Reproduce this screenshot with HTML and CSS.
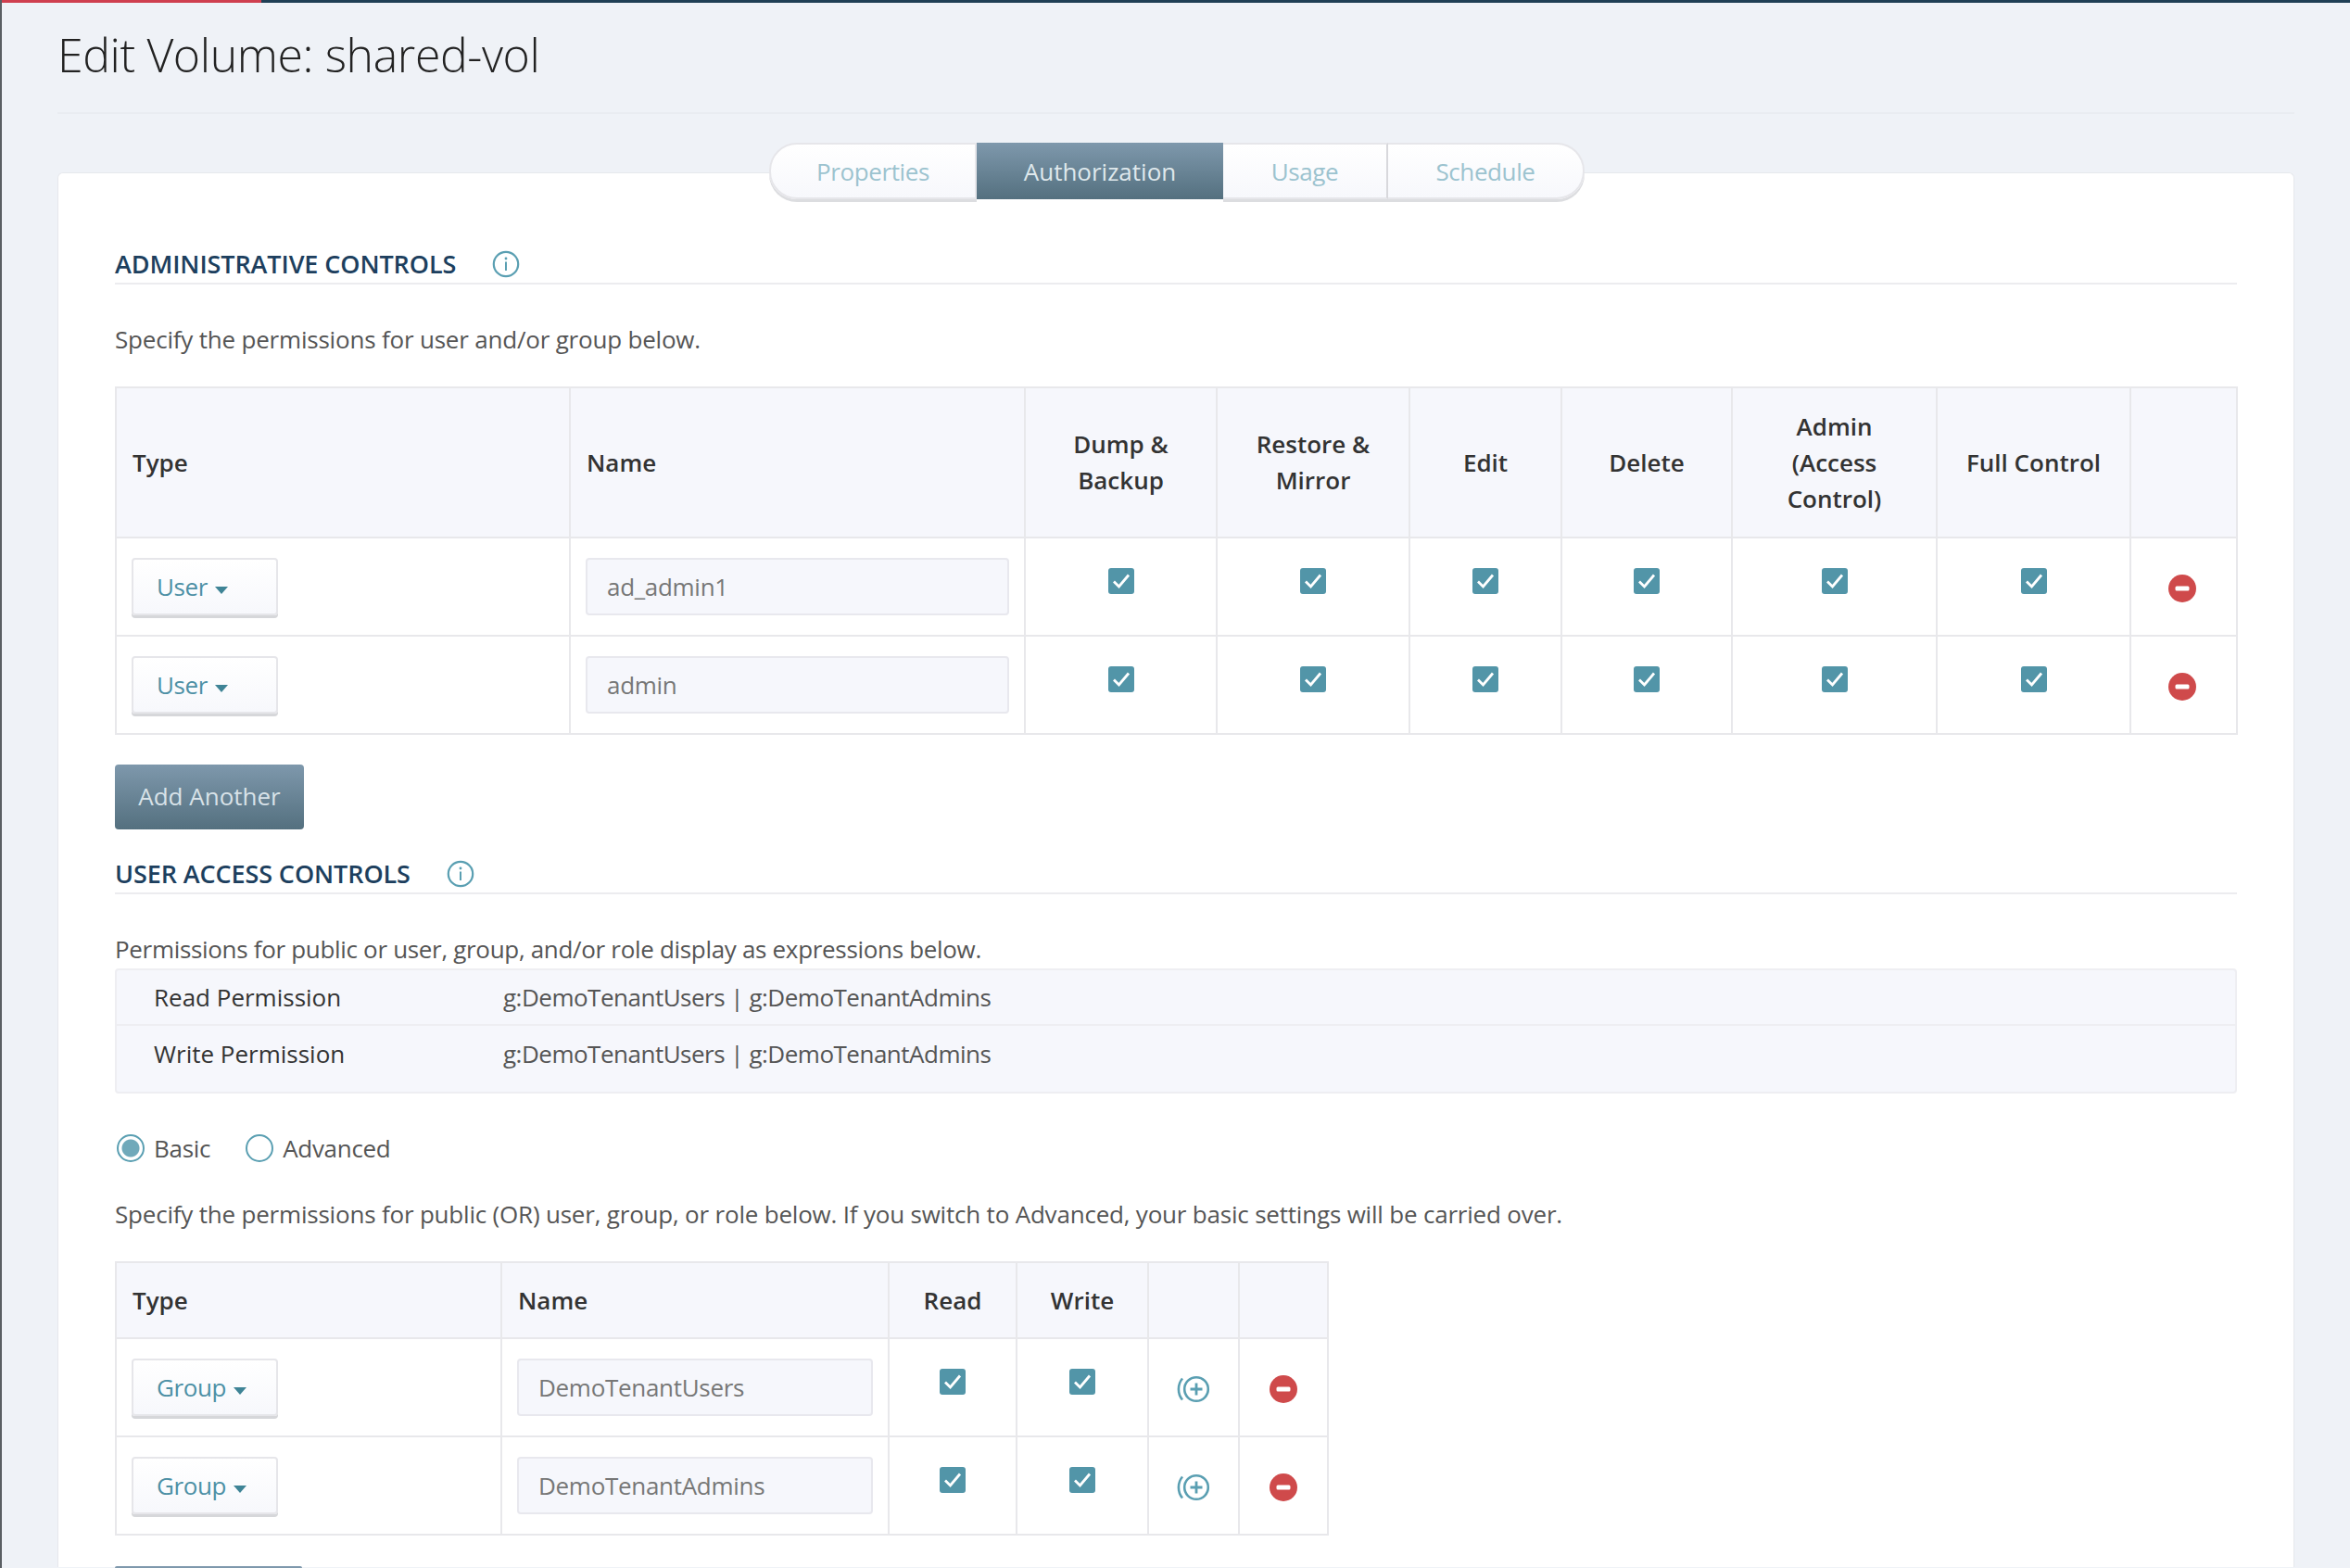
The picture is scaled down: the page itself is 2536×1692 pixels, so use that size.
FILE: index.html
```html
<!DOCTYPE html>
<html lang="en">
<head>
    <meta charset="UTF-8">
    <title>Edit Volume: shared-vol</title>
    <link rel="stylesheet" href="styles.css">
</head>
<body>
    <svg class="defs" width="0" height="0">
        <symbol id="i-info" viewBox="0 0 30 30">
            <circle cx="15" cy="15" r="13.2" fill="none" stroke="#5a9fb2" stroke-width="2.2"/>
            <circle cx="15" cy="9" r="1.4" fill="#5a9fb2"/>
            <rect x="14" y="12.5" width="2" height="9.5" fill="#5a9fb2"/>
        </symbol>
        <symbol id="i-check" viewBox="0 0 28 28">
            <rect width="28" height="28" rx="3" fill="#5295a8"/>
            <path d="M6 14.5l5.5 5.5L22 7.5" fill="none" stroke="#fff" stroke-width="2.8"/>
        </symbol>
        <symbol id="i-remove" viewBox="0 0 30 30">
            <circle cx="15" cy="15" r="15" fill="#cf4a4b"/>
            <rect x="7.5" y="12.5" width="15" height="5" rx="1.5" fill="#fff"/>
        </symbol>
        <symbol id="i-add" viewBox="0 0 38 30">
            <path d="M7 3.5C1.5 10 1.5 20 7 26.5" fill="none" stroke="#5a9fb2" stroke-width="2.6"/>
            <circle cx="22" cy="15" r="12.8" fill="none" stroke="#5a9fb2" stroke-width="2.6"/>
            <path d="M22 8.5v13M15.5 15h13" fill="none" stroke="#5a9fb2" stroke-width="2.8"/>
        </symbol>
    </svg>

    <div class="topbar"><div class="topbar-red"></div></div>

    <div class="page">
        <h1 class="page-title">Edit Volume: shared-vol</h1>

        <div class="card">
            <div class="tabs">
                <a class="tab tab-props">Properties</a>
                <a class="tab tab-auth active">Authorization</a>
                <a class="tab tab-usage">Usage</a>
                <a class="tab tab-sched">Schedule</a>
            </div>

            <div class="section-head first">
                <span class="section-title">ADMINISTRATIVE CONTROLS</span>
                <svg class="info"><use href="#i-info"/></svg>
            </div>
            <p class="desc desc-admin">Specify the permissions for user and/or group below.</p>

            <table class="grid grid-admin">
                <colgroup>
                    <col class="a1"><col class="a2"><col class="a3"><col class="a4"><col class="a5"><col class="a6"><col class="a7"><col class="a8"><col class="a9">
                </colgroup>
                <thead>
                    <tr>
                        <th class="left">Type</th>
                        <th class="left">Name</th>
                        <th>Dump &amp;<br>Backup</th>
                        <th>Restore &amp;<br>Mirror</th>
                        <th>Edit</th>
                        <th>Delete</th>
                        <th>Admin<br>(Access<br>Control)</th>
                        <th>Full Control</th>
                        <th></th>
                    </tr>
                </thead>
                <tbody>
                    <tr>
                        <td><button class="select">User <i class="caret"></i></button></td>
                        <td><div class="text-input">ad_admin1</div></td>
                        <td class="chk"><svg class="check"><use href="#i-check"/></svg></td>
                        <td class="chk"><svg class="check"><use href="#i-check"/></svg></td>
                        <td class="chk"><svg class="check"><use href="#i-check"/></svg></td>
                        <td class="chk"><svg class="check"><use href="#i-check"/></svg></td>
                        <td class="chk"><svg class="check"><use href="#i-check"/></svg></td>
                        <td class="chk"><svg class="check"><use href="#i-check"/></svg></td>
                        <td class="act"><svg class="remove"><use href="#i-remove"/></svg></td>
                    </tr>
                    <tr>
                        <td><button class="select">User <i class="caret"></i></button></td>
                        <td><div class="text-input">admin</div></td>
                        <td class="chk"><svg class="check"><use href="#i-check"/></svg></td>
                        <td class="chk"><svg class="check"><use href="#i-check"/></svg></td>
                        <td class="chk"><svg class="check"><use href="#i-check"/></svg></td>
                        <td class="chk"><svg class="check"><use href="#i-check"/></svg></td>
                        <td class="chk"><svg class="check"><use href="#i-check"/></svg></td>
                        <td class="chk"><svg class="check"><use href="#i-check"/></svg></td>
                        <td class="act"><svg class="remove"><use href="#i-remove"/></svg></td>
                    </tr>
                </tbody>
            </table>

            <button class="btn-primary">Add Another</button>

            <div class="section-head second">
                <span class="section-title">USER ACCESS CONTROLS</span>
                <svg class="info"><use href="#i-info"/></svg>
            </div>
            <p class="desc desc-user">Permissions for public or user, group, and/or role display as expressions below.</p>

            <div class="expr-panel">
                <div class="expr-row">
                    <span class="expr-label">Read Permission</span>
                    <span>g:DemoTenantUsers | g:DemoTenantAdmins</span>
                </div>
                <div class="expr-row">
                    <span class="expr-label">Write Permission</span>
                    <span>g:DemoTenantUsers | g:DemoTenantAdmins</span>
                </div>
            </div>

            <div class="radios">
                <span class="radio on"></span><span class="radio-label">Basic</span>
                <span class="radio"></span><span class="radio-label">Advanced</span>
            </div>

            <p class="desc desc-basic">Specify the permissions for public (OR) user, group, or role below. If you switch to Advanced, your basic settings will be carried over.</p>

            <table class="grid grid-basic">
                <colgroup>
                    <col class="b1"><col class="b2"><col class="b3"><col class="b4"><col class="b5"><col class="b6">
                </colgroup>
                <thead>
                    <tr>
                        <th class="left">Type</th>
                        <th class="left">Name</th>
                        <th>Read</th>
                        <th>Write</th>
                        <th></th>
                        <th></th>
                    </tr>
                </thead>
                <tbody>
                    <tr>
                        <td><button class="select">Group <i class="caret"></i></button></td>
                        <td><div class="text-input">DemoTenantUsers</div></td>
                        <td class="chk"><svg class="check"><use href="#i-check"/></svg></td>
                        <td class="chk"><svg class="check"><use href="#i-check"/></svg></td>
                        <td class="act"><svg class="add"><use href="#i-add"/></svg></td>
                        <td class="act"><svg class="remove"><use href="#i-remove"/></svg></td>
                    </tr>
                    <tr>
                        <td><button class="select">Group <i class="caret"></i></button></td>
                        <td><div class="text-input">DemoTenantAdmins</div></td>
                        <td class="chk"><svg class="check"><use href="#i-check"/></svg></td>
                        <td class="chk"><svg class="check"><use href="#i-check"/></svg></td>
                        <td class="act"><svg class="add"><use href="#i-add"/></svg></td>
                        <td class="act"><svg class="remove"><use href="#i-remove"/></svg></td>
                    </tr>
                </tbody>
            </table>

            <div class="btn-stub"></div>
        </div>
    </div>
</body>
</html>
```

FILE: styles.css
```css
html, body {
    height: 1692px;
    overflow: hidden;
}
body {
    margin: 0;
    background-color: #eff2f7;
    border-left: 2px solid #5a5f63;
    font-family: "Open Sans", "Noto Sans", sans-serif;
    font-size: 26px;
    letter-spacing: -0.2px;
    color: #555;
}
.defs {
    position: absolute;
}
.topbar {
    height: 3px;
    background-color: #1f3f55;
    margin-left: -2px;
}
.topbar-red {
    width: 282px;
    height: 3px;
    background-color: #cf3f4f;
}
.page {
    padding: 0 60px;
}
.page-title {
    margin: 0 0 63px;
    height: 120px;
    box-sizing: border-box;
    padding-top: 25px;
    font-size: 50px;
    line-height: 62px;
    font-weight: 300;
    letter-spacing: -0.4px;
    color: #222;
    border-bottom: 2px solid #e9ecf1;
}
.card {
    box-sizing: border-box;
    height: 1505px;
    background-color: #fff;
    border: 1px solid #e6e8ec;
    border-bottom: 0;
    border-radius: 6px 6px 0 0;
    padding: 0 61px;
}

/* tabs */
.tabs {
    display: flex;
    justify-content: center;
    margin: -33px 0 0 2px;
    height: 63px;
}
.tab {
    box-sizing: border-box;
    height: 61px;
    padding-top: 1px;
    display: flex;
    align-items: center;
    justify-content: center;
    background: linear-gradient(#fff, #f7f8fc);
    border: 2px solid #e6e6ea;
    border-left: 0;
    box-shadow: 0 3px 0 #dcdde0;
    letter-spacing: -0.4px;
    color: #9cc3cf;
}
.tab-props {
    width: 224px;
    border-left: 2px solid #e6e6ea;
    border-radius: 30px 0 0 30px;
}
.tab-auth {
    width: 266px;
}
.tab-usage {
    width: 178px;
    border-right-color: #d8d8dc;
}
.tab-sched {
    width: 212px;
    border-radius: 0 30px 30px 0;
}
.tab.active {
    background: linear-gradient(#7e98ac, #54707f);
    border: 0;
    box-shadow: none;
    letter-spacing: 0;
    color: #dfe8ec;
}

/* section headings */
.section-head {
    display: flex;
    align-items: center;
    gap: 39px;
    box-sizing: border-box;
    height: 47px;
    padding-top: 4px;
    border-bottom: 2px solid #ececef;
}
.section-head.first {
    margin-top: 43px;
}
.section-head.second {
    margin-top: 23px;
}
.section-title {
    font-size: 27px;
    font-weight: 600;
    letter-spacing: -0.1px;
    color: #1d3f5e;
}
.info {
    width: 30px;
    height: 30px;
}
.desc {
    margin: 0;
    line-height: 36px;
}
.desc-admin {
    margin: 41px 0 33px;
}
.desc-user {
    margin: 41px 0 3px;
    letter-spacing: -0.32px;
}
.desc-basic {
    margin: 35px 0 33px;
}

/* tables */
.grid {
    border-collapse: collapse;
    table-layout: fixed;
}
.grid th, .grid td {
    border: 2px solid #e8e8eb;
    padding: 0;
}
.grid th {
    background-color: #f6f7fc;
    font-weight: 600;
    letter-spacing: 0;
    color: #333;
    line-height: 39px;
    text-align: center;
}
.grid th.left {
    text-align: left;
    padding-left: 17px;
}
.grid td {
    height: 104px;
    padding-left: 16px;
    vertical-align: middle;
}
.grid-admin {
    width: 2289px;
}
.grid-admin thead tr {
    height: 162px;
}
.grid-basic {
    width: 1308px;
}
.grid-basic thead tr {
    height: 82px;
}
.a1 { width: 490px; }
.a2 { width: 491px; }
.a3 { width: 207px; }
.a4 { width: 208px; }
.a5 { width: 164px; }
.a6 { width: 184px; }
.a7 { width: 221px; }
.a8 { width: 209px; }
.a9 { width: 115px; }
.b1 { width: 416px; }
.b2 { width: 418px; }
.b3 { width: 138px; }
.b4 { width: 142px; }
.b5 { width: 98px; }
.b6 { width: 96px; }

.select {
    display: block;
    box-sizing: border-box;
    width: 158px;
    height: 62px;
    padding: 0 0 0 25px;
    background: linear-gradient(#fff, #f7f8fc);
    border: 2px solid #e6e6ea;
    border-radius: 4px;
    box-shadow: 0 3px 0 #d6d7da;
    font: inherit;
    letter-spacing: -0.4px;
    color: #4d90a5;
    text-align: left;
}
.caret {
    display: inline-block;
    vertical-align: 2px;
    margin-left: 2px;
    border-top: 8px solid #3f8496;
    border-left: 7px solid transparent;
    border-right: 7px solid transparent;
}
.text-input {
    box-sizing: border-box;
    height: 62px;
    line-height: 58px;
    padding-left: 21px;
    background-color: #f6f7fc;
    border: 2px solid #e8e8ee;
    border-radius: 4px;
    letter-spacing: -0.3px;
    color: #777;
    margin-right: 16px;
}
.grid .chk {
    padding: 0;
    text-align: center;
    vertical-align: top;
}
.check {
    display: block;
    width: 28px;
    height: 28px;
    margin: 32px auto 0;
}
.grid .act {
    padding: 0;
    text-align: center;
}
.grid-admin .act {
    padding-right: 4px;
}
.remove {
    display: block;
    width: 30px;
    height: 30px;
    margin: 4px auto 0;
}
.add {
    display: block;
    width: 38px;
    height: 30px;
    margin: 4px auto 0;
}

.btn-primary {
    display: block;
    box-sizing: border-box;
    width: 204px;
    height: 70px;
    margin-top: 32px;
    padding: 0 0 3px;
    background: linear-gradient(#7e98ac, #54707f);
    border: 0;
    border-radius: 4px;
    font: inherit;
    letter-spacing: 0;
    color: #d8e2e8;
}
.btn-stub {
    width: 202px;
    height: 2px;
    margin-top: 33px;
    background-color: #7e98ac;
    border-radius: 2px 2px 0 0;
}

/* expressions panel */
.expr-panel {
    height: 135px;
    box-sizing: border-box;
    background-color: #f6f7fc;
    border: 2px solid #eeeef2;
    border-radius: 4px;
    letter-spacing: -0.5px;
}
.expr-row {
    display: flex;
    height: 60px;
    align-items: center;
    padding: 0 0 1px 40px;
    box-sizing: border-box;
    border-bottom: 2px solid #eeeef2;
}
.expr-row:last-child {
    border-bottom: 0;
}
.expr-label {
    width: 377px;
    color: #333;
    font-weight: 500;
    letter-spacing: 0;
}

/* radios */
.radios {
    display: flex;
    align-items: center;
    height: 36px;
    margin-top: 41px;
    padding-left: 2px;
    letter-spacing: -0.3px;
}
.radio {
    box-sizing: border-box;
    width: 30px;
    height: 30px;
    border: 2px solid #5a9fb2;
    border-radius: 50%;
    margin-right: 10px;
}
.radio.on {
    background: radial-gradient(circle, #70a9ba 0 9px, #fff 10px);
}
.radio-label {
    margin-right: 38px;
}
```
